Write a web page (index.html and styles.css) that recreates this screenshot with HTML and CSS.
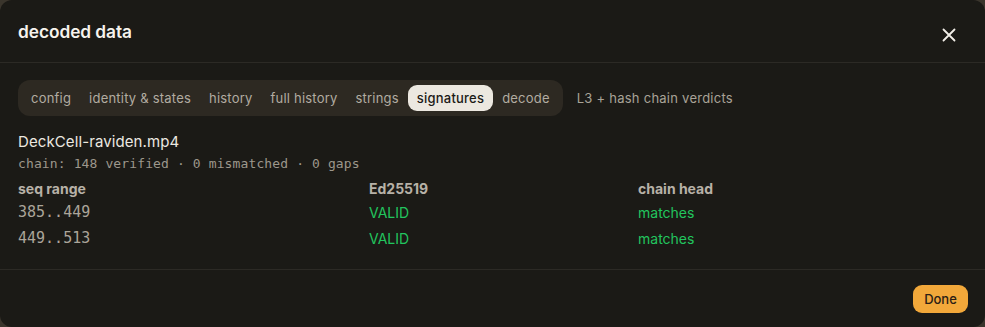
FILE: index.html
```html
<!DOCTYPE html>
<html>
<head>
<meta charset="utf-8">
<link rel="stylesheet" href="styles.css">
</head>
<body>
<div class="modal">
  <header class="head">
    <h1 class="title">decoded data</h1>
    <button class="close" aria-label="close">
      <svg width="14" height="14" viewBox="0 0 14 14"><path d="M1.5 1.5 L12.5 12.5 M12.5 1.5 L1.5 12.5" stroke="#f2efe8" stroke-width="1.8" stroke-linecap="round"/></svg>
    </button>
  </header>
  <main class="body">
    <div class="tabrow">
      <nav class="tabs">
        <span class="tab">config</span>
        <span class="tab">identity &amp; states</span>
        <span class="tab">history</span>
        <span class="tab">full history</span>
        <span class="tab">strings</span>
        <span class="tab active">signatures</span>
        <span class="tab">decode</span>
      </nav>
      <span class="hint">L3 + hash chain verdicts</span>
    </div>
    <div class="file">DeckCell-raviden.mp4</div>
    <div class="summary">chain: 148 verified · 0 mismatched · 0 gaps</div>
    <div class="table">
      <div class="th">seq range</div>
      <div class="th">Ed25519</div>
      <div class="th">chain head</div>
      <div class="td mono">385..449</div>
      <div class="td ok">VALID</div>
      <div class="td ok">matches</div>
      <div class="td mono">449..513</div>
      <div class="td ok">VALID</div>
      <div class="td ok">matches</div>
    </div>
  </main>
  <footer class="foot">
    <button class="done">Done</button>
  </footer>
</div>
</body>
</html>
```

FILE: styles.css
```css
html, body {
  margin: 0;
  padding: 0;
  background: #3a352c;
  height: 327px;
  overflow: hidden;
}
.modal {
  width: 985px;
  height: 327px;
  box-sizing: border-box;
  background: #1b1a16;
  border-radius: 12px;
  display: flex;
  flex-direction: column;
  font-family: Inter, "Noto Sans", sans-serif;
  color: #ece8e0;
}
.head {
  height: 63px;
  box-sizing: border-box;
  border-bottom: 1px solid #2c2a25;
  display: flex;
  align-items: center;
  justify-content: space-between;
  padding: 0 29px 0 18px;
}
.title {
  margin: 0;
  font-size: 17.3px;
  font-weight: 600;
  color: #f6f3ee;
  letter-spacing: -0.05px;
}
.close {
  background: none;
  border: none;
  padding: 0;
  width: 14px;
  height: 14px;
  display: flex;
  margin-top: 8px;
}
.body {
  flex: 1;
  padding: 17px 18px 0;
  border-bottom: 1px solid #2c2a25;
}
.tabrow {
  display: flex;
  align-items: center;
  gap: 14px;
}
.tabs {
  display: flex;
  background: #2d2922;
  border-radius: 12px;
  padding: 5px 4px;
}
.tab {
  font-size: 13px;
  letter-spacing: 0.21px;
  color: #b2aca1;
  padding: 0 9px;
  height: 26px;
  line-height: 26px;
  border-radius: 9px;
}
.tab.active {
  background: #ece8e0;
  color: #1b1a16;
  font-weight: 500;
}
.hint {
  font-size: 13px;
  letter-spacing: 0.25px;
  color: #a9a397;
}
.file {
  margin-top: 16px;
  font-size: 15px;
  letter-spacing: 0.1px;
  color: #ece8e0;
  line-height: 20px;
}
.summary {
  margin-top: 3px;
  font-family: "DejaVu Sans Mono", monospace;
  font-size: 13px;
  letter-spacing: 0.12px;
  color: #9d978c;
  line-height: 17px;
}
.table {
  margin-top: 7px;
  display: grid;
  grid-template-columns: 351px 269px 1fr;
  grid-template-rows: 20px 26px 26px;
  align-items: center;
}
.th {
  font-size: 14px;
  font-weight: 700;
  color: #b7b1a7;
  line-height: 20px;
}
.td {
  font-size: 14px;
}
.mono {
  font-family: "DejaVu Sans Mono", monospace;
  color: #aba59a;
  font-size: 15px;
}
.ok {
  color: #22c55e;
}
.foot {
  height: 57px;
  display: flex;
  align-items: center;
  justify-content: flex-end;
  padding: 0 17px;
}
.done {
  background: #f2a83a;
  border: none;
  border-radius: 9px;
  font-family: Inter, "Noto Sans", sans-serif;
  font-size: 13px;
  font-weight: 500;
  color: #2a2015;
  width: 55px;
  height: 28px;
  padding: 0;
}
```
